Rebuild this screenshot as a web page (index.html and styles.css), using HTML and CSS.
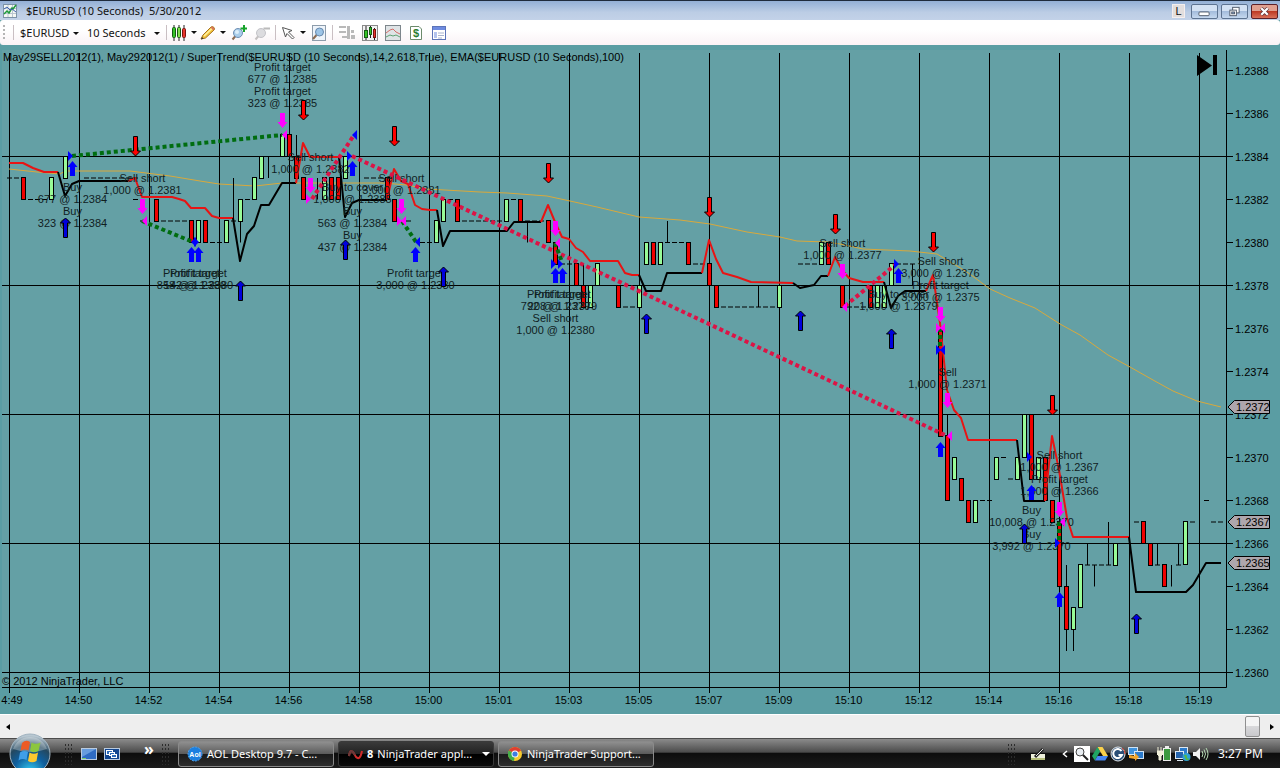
FILE: index.html
```
<!DOCTYPE html>
<html lang="en">
    <head>
        <meta charset="utf-8">
        <title>$EURUSD (10 Seconds) 5/30/2012</title>
        <link rel="stylesheet" href="styles.css">
    </head>
    <body>
        <header class="title-bar">
            <svg class="app-icon" viewBox="0 0 14 14">
                <rect x="0.5" y="0.5" width="13" height="13" fill="#f4f8f4" stroke="#7d93a8" />
                <path d="M1 4.5H13M1 9.5H13M5 1V13M9.5 1V13" stroke="#b9c6d0" fill="none" />
                <path d="M1 10L4 7L6 9L9 4L10 5L13 1" stroke="#1f9a3a" stroke-width="1.5" fill="none" />
                <path d="M1 5L4 3L7 6L9 5L13 8" stroke="#3f62b0" fill="none" />
            </svg>
            <h1>$EURUSD (10 Seconds)&nbsp; 5/30/2012</h1>
            <div class="window-buttons">
                <button class="link-button">L</button>
                <button class="win-button" aria-label="Minimize">
                    <svg viewBox="0 0 27 14"><rect x="7.5" y="7.5" width="11" height="4" rx="1" fill="#fff" stroke="#4c5666" /></svg>
                </button>
                <button class="win-button" aria-label="Restore">
                    <svg viewBox="0 0 27 14">
                        <rect x="11.5" y="2.5" width="7" height="6" fill="#fff" stroke="#4c5666" />
                        <rect x="8.5" y="5.5" width="7" height="6" fill="#fff" stroke="#4c5666" />
                        <rect x="10.5" y="7.5" width="3" height="2" fill="#8ba6cd" stroke="#4c5666" />
                    </svg>
                </button>
                <button class="win-button close" aria-label="Close">
                    <svg viewBox="0 0 27 14">
                        <path d="M10 3.500L17 10.500M17 3.500L10 10.500" stroke="#5a3238" stroke-width="4" />
                        <path d="M10 3.500L17 10.500M17 3.500L10 10.500" stroke="#fff" stroke-width="2.400" />
                    </svg>
                </button>
            </div>
        </header>

        <nav class="toolbar">
            <span class="grip"></span>
            <span class="separator"></span>
            <label class="picker instrument">
                <select aria-label="Instrument"><option>$EURUSD</option></select>
            </label>
            <label class="picker interval">
                <select aria-label="Interval"><option>10 Seconds</option></select>
            </label>
            <span class="separator"></span>
            <button class="tool drop" aria-label="Chart style">
                <svg viewBox="0 0 16 16">
                    <path d="M3 0V16M8 0V16M13 0V16" stroke="#222" />
                    <rect x="1.500" y="2.500" width="3" height="10" rx="1" fill="#35c427" stroke="#145c12" />
                    <rect x="6.500" y="2.500" width="3" height="10" rx="1" fill="#7fdf4c" stroke="#145c12" />
                    <rect x="11.500" y="3.500" width="3" height="9" rx="1" fill="#e8362c" stroke="#7a1310" />
                </svg>
            </button>
            <button class="tool drop" aria-label="Drawing tools">
                <svg viewBox="0 0 16 16">
                    <path d="M1 14L3 10L11 2Q12.500 1 14 2.500Q15 4 14 5L5.500 13Z" fill="#f5c73c" stroke="#a5701d" />
                    <path d="M4 11L12 3.500" stroke="#fff0a0" stroke-width="1.500" />
                    <path d="M10.500 2.500L13.500 5.500L14.500 4L12.500 1.500Z" fill="#d9735c" />
                    <path d="M1 14.500L2 12L3.500 13.500Z" fill="#333" />
                </svg>
            </button>
            <button class="tool" aria-label="Zoom in">
                <svg viewBox="0 0 16 16">
                    <path d="M4.500 11L1.500 14.500" stroke="#8b6b52" stroke-width="2" />
                    <circle cx="7" cy="8" r="4.500" fill="#a9cdea" stroke="#6f8fb3" />
                    <circle cx="6" cy="7" r="2" fill="#dceefa" />
                    <path d="M13 0V7M9.500 3.500H16" stroke="#16a32a" stroke-width="2" />
                </svg>
            </button>
            <button class="tool" aria-label="Zoom out">
                <svg viewBox="0 0 16 16">
                    <path d="M4.500 11L1.500 14.500" stroke="#c4c0c0" stroke-width="2" />
                    <circle cx="7" cy="8" r="4.500" fill="#dcdcdf" stroke="#c3c3c8" />
                    <path d="M9.500 3.500H16" stroke="#bbb" stroke-width="2" />
                </svg>
            </button>
            <span class="separator"></span>
            <button class="tool drop" aria-label="Cursor">
                <svg viewBox="0 0 16 16">
                    <path d="M2.500 2.500L12 5.500L8.500 7L14 12.500L12.500 14L7 8.500L5.500 12Z" fill="#fff" stroke="#555" />
                </svg>
            </button>
            <button class="tool" aria-label="Data box">
                <svg viewBox="0 0 16 16">
                    <rect x="1.500" y="0.500" width="13" height="15" fill="#eef4fa" stroke="#8d9cab" />
                    <path d="M5.500 10L2 14" stroke="#8b6b52" stroke-width="2" />
                    <circle cx="8.500" cy="7" r="4" fill="#9cc4e6" stroke="#6688ad" />
                </svg>
            </button>
            <span class="separator"></span>
            <button class="tool" aria-label="Chart trader">
                <svg viewBox="0 0 16 16" fill="#b9b9b9">
                    <rect x="0" y="1" width="7" height="2" /><rect x="0" y="6" width="7" height="2" />
                    <rect x="3" y="11" width="5" height="2" /><rect x="8" y="1" width="3" height="13" />
                    <rect x="12" y="5" width="3" height="3" /><rect x="12" y="10" width="4" height="4" />
                </svg>
            </button>
            <button class="tool" aria-label="Data series">
                <svg viewBox="0 0 16 16">
                    <rect x="0.500" y="0.500" width="15" height="15" fill="#f2f2f2" stroke="#8a8a8a" />
                    <path d="M4 1V15M8.500 1V13M12.500 3V15" stroke="#222" />
                    <rect x="2.500" y="5.500" width="3" height="7" fill="#35c427" stroke="#145c12" />
                    <rect x="7.500" y="2.500" width="2" height="7" fill="#35c427" stroke="#145c12" />
                    <rect x="11.500" y="4.500" width="2" height="8" fill="#e8362c" stroke="#7a1310" />
                </svg>
            </button>
            <button class="tool" aria-label="Indicators">
                <svg viewBox="0 0 16 16">
                    <rect x="0.500" y="0.500" width="15" height="15" fill="#dfe4e6" stroke="#7d868c" />
                    <path d="M1 8L5 5L8 4L11 7L15 9" stroke="#d36d68" fill="none" />
                    <path d="M1 12L5 10L8 11L11 10L15 12" stroke="#5ea274" fill="none" />
                </svg>
            </button>
            <button class="tool" aria-label="Strategies">
                <svg viewBox="0 0 16 16">
                    <path d="M2.500 1.500H11L13.500 4V14.500H2.500Z" fill="#fff" stroke="#6b8a6b" />
                    <text x="8" y="12" class="dollar">$</text>
                </svg>
            </button>
            <button class="tool" aria-label="Properties">
                <svg viewBox="0 0 16 16">
                    <rect x="1.500" y="1.500" width="13" height="13" fill="#fff" stroke="#5c74b8" />
                    <rect x="2" y="2" width="12" height="3" fill="#6e8be0" />
                    <rect x="3" y="7" width="3" height="6" fill="#b3c3ee" />
                    <path d="M7 8H13M7 10.500H13M7 13H11" stroke="#a9b4cf" />
                </svg>
            </button>
        </nav>

        <main class="chart-panel">
            <svg id="chart" viewBox="0 45 1280 669" role="img" aria-label="$EURUSD 10 second chart"></svg>
        </main>

        <div class="scroll-bar">
            <button aria-label="Scroll left">
                <svg viewBox="0 0 4 6"><path d="M4 0V6L0 3Z" /></svg>
            </button>
            <div class="scroll-track"><div class="scroll-thumb"></div></div>
            <button aria-label="Scroll right">
                <svg viewBox="0 0 4 6"><path d="M0 0V6L4 3Z" /></svg>
            </button>
        </div>

        <footer class="taskbar">
            <button class="start" aria-label="Start">
                <svg viewBox="0 0 42 35">
                    <defs>
                        <radialGradient id="orb" cx="50%" cy="95%" r="90%">
                            <stop offset="0" stop-color="#36d0f5" />
                            <stop offset="0.450" stop-color="#0f5f9e" />
                            <stop offset="0.750" stop-color="#24485f" />
                            <stop offset="1" stop-color="#b9c8d2" />
                        </radialGradient>
                    </defs>
                    <circle cx="21" cy="21" r="20" fill="url(#orb)" stroke="#9fb2bf" />
                    <path d="M4 16A18 18 0 0 1 38 16Q21 22 4 16Z" fill="#fff" opacity="0.300" />
                    <path d="M13 10Q17 6 21 9L19.500 17.500Q15.500 15.500 11.500 18Z" fill="#ec5a24" />
                    <path d="M22.500 9.500Q26.500 12 31.500 9.500L29.500 18Q25 20.500 21 18Z" fill="#8cc63e" />
                    <path d="M11 19.500Q15 17 19 19L17.500 27Q13.500 25 9.500 27.500Z" fill="#3f9ee8" />
                    <path d="M20.500 19.500Q25 22 29 19.500L27.500 28Q23 30.500 19 28Z" fill="#fdc82f" />
                </svg>
            </button>
            <span class="dots"></span>
            <div class="quick-launch">
                <button aria-label="Show desktop">
                    <svg viewBox="0 0 16 14">
                        <rect x="0.500" y="1.500" width="15" height="11" fill="#2f6cc4" stroke="#b9cbe0" />
                        <path d="M1 2H15L1 10Z" fill="#7fb0ea" opacity="0.700" />
                        <path d="M1 11.500H5" stroke="#7fd06a" />
                    </svg>
                </button>
                <button aria-label="Switch windows">
                    <svg viewBox="0 0 16 14">
                        <rect x="0.500" y="1.500" width="15" height="11" fill="#12458f" stroke="#b9cbe0" />
                        <rect x="2.500" y="3.500" width="6" height="4" fill="#2c6ab8" stroke="#fff" />
                        <rect x="5.500" y="5.500" width="5" height="3" fill="#2c6ab8" stroke="#fff" />
                        <rect x="7.500" y="7.500" width="5" height="3" fill="#2c6ab8" stroke="#fff" />
                    </svg>
                </button>
                <button class="more" aria-label="More">»</button>
            </div>
            <span class="dots"></span>
            <div class="tasks">
                <button class="task">
                    <svg viewBox="0 0 16 16">
                        <circle cx="8" cy="8" r="7" fill="#1b7fe0" stroke="#4aa2f2" stroke-dasharray="2 1" />
                        <text x="8" y="11" class="aol">Aol</text>
                    </svg>
                    <span>AOL Desktop 9.7 - C...</span>
                </button>
                <button class="task active">
                    <svg viewBox="0 0 16 16">
                        <path d="M2 10Q3 3 6 6L9 11Q13 15 15 5" stroke="#d02a2a" stroke-width="2" fill="none" />
                        <path d="M2 10Q3 3 6 6L8 9" stroke="#6b3a3a" stroke-width="2" fill="none" />
                    </svg>
                    <b>8</b>
                    <span>NinjaTrader appl...</span>
                    <i class="caret"></i>
                </button>
                <button class="task">
                    <svg viewBox="0 0 16 16">
                        <circle cx="8" cy="8" r="7" fill="#f7ca2e" />
                        <path d="M8 8L1.900 4.500A7 7 0 0 1 14.100 4.500Z" fill="#df3f31" />
                        <path d="M8 8L1.900 4.500A7 7 0 0 0 7 15Z" fill="#3fae49" />
                        <circle cx="8" cy="8" r="3.500" fill="#fff" />
                        <circle cx="8" cy="8" r="2.600" fill="#3f7de0" />
                    </svg>
                    <span>NinjaTrader Support...</span>
                </button>
            </div>
            <div class="tray">
                <span class="dots"></span>
                <svg class="pen" viewBox="0 0 16 16">
                    <path d="M1 8H15V14H1Z" fill="#eef0dc" /><path d="M1 13H15" stroke="#b6bf7a" stroke-width="2" />
                    <path d="M5 11L13 3" stroke="#222" stroke-width="3" /><path d="M6 10L13 3" stroke="#e8e8e8" />
                </svg>
                <button class="expand" aria-label="Show hidden icons">
                    <svg viewBox="0 0 6 8"><path d="M5 1L1.500 4L5 7" stroke="#fff" stroke-width="1.500" fill="none" /></svg>
                </button>
                <svg viewBox="0 0 16 16">
                    <rect width="16" height="16" fill="#fff" />
                    <circle cx="6" cy="6" r="4" fill="#e9eef2" stroke="#444" />
                    <path d="M9 9L14 14" stroke="#222" stroke-width="2" />
                </svg>
                <svg viewBox="0 0 16 16">
                    <path d="M5.500 1H10.500L16 10H11Z" fill="#fbd14b" />
                    <path d="M5.500 1L8 5.500L2.800 14.500L0 10Z" fill="#1fa463" />
                    <path d="M5.500 10H16L13.200 14.500H2.800Z" fill="#4687f4" />
                </svg>
                <svg viewBox="0 0 16 16">
                    <circle cx="8" cy="8" r="7" fill="#2b4f77" stroke="#e5e9ec" />
                    <path d="M11.500 5A4.500 4.500 0 1 0 12 9H8.500" stroke="#fff" stroke-width="2" fill="none" />
                    <path d="M12 2A7 7 0 0 1 15 8" stroke="#d9402f" fill="none" />
                </svg>
                <svg viewBox="0 0 16 16">
                    <rect x="0.500" y="1.500" width="9" height="7" fill="#3e92dd" stroke="#cfe3f5" />
                    <rect x="6.500" y="5.500" width="9" height="7" fill="#2b7acb" stroke="#cfe3f5" />
                    <path d="M1 9L7 10V7L11 11L7 15V13L1 12Z" fill="#f3a62b" />
                </svg>
                <svg class="power" viewBox="0 0 16 16">
                    <rect x="6.500" y="2.500" width="7" height="12" fill="#3c9a3f" stroke="#eee" />
                    <rect x="8" y="0" width="4" height="2" fill="#eee" />
                    <path d="M1 1V5M4 1V5M0 5H6V8L4 10V14H2V10L0 8Z" fill="#f0efd8" stroke="#f0efd8" />
                </svg>
                <svg viewBox="0 0 16 16">
                    <rect x="4.500" y="1.500" width="8" height="7" fill="#2b7acb" stroke="#dde8f2" />
                    <rect x="0.500" y="5.500" width="8" height="7" fill="#2463ae" stroke="#dde8f2" />
                    <path d="M2 14.500H8" stroke="#dde8f2" />
                    <circle cx="11.500" cy="11" r="4" fill="#2e9fd8" /><path d="M9 9Q12 8 12 11T15 12Q13 15 11 14Z" fill="#55b944" />
                </svg>
                <svg viewBox="0 0 16 16">
                    <path d="M0 6H3L7 2V14L3 10H0Z" fill="#f2f2f2" />
                    <path d="M9 5Q11 8 9 11M11 3.500Q14 8 11 12.500M13 2Q17 8 13 14" stroke="#b7dcb5" fill="none" />
                </svg>
                <time class="clock">3:27 PM</time>
            </div>
        </footer>
        <script src="chart.js"></script>
    </body>
</html>
```
FILE: styles.css
```
* {
    box-sizing: border-box;
}

body {
    margin: 0;
    min-height: 100vh;
    display: flex;
    flex-direction: column;
    background: #5a9da3;
    font-family: "Noto Sans", "Open Sans", sans-serif;
    font-size: 11px;
    color: #111;
}

button,
select {
    margin: 0;
    padding: 0;
    border: none;
    background: none;
    font: inherit;
    color: inherit;
}

svg {
    display: block;
}

/* title bar */
.title-bar {
    display: flex;
    align-items: center;
    height: 20px;
    padding: 1px 2px 0 3px;
    border-top: 1px solid #1f2b3c;
    background: linear-gradient(#93b0d6, #bccde5 60%, #c3d2e8);
}

.app-icon {
    width: 14px;
    height: 14px;
}

.title-bar h1 {
    flex: 1;
    margin: 0 0 0 9px;
    font-size: 11px;
    font-weight: normal;
    line-height: 18px;
}

.window-buttons {
    display: flex;
    gap: 3px;
}

.link-button {
    width: 13px;
    height: 14px;
    margin-right: 3px;
    border: 1px solid #f4eeee;
    background: #e2dede;
    font-family: "Liberation Sans", sans-serif;
    font-size: 11px;
    line-height: 12px;
}

.win-button {
    width: 27px;
    height: 15px;
    border: 1px solid #5d7391;
    border-radius: 2px;
    background: linear-gradient(#d3e1f3 45%, #a4bcdc 50%, #c5d8ef);
}

.win-button svg {
    width: 25px;
    height: 13px;
}

.close {
    border-color: #5c2028;
    background: linear-gradient(#e0a090 45%, #bd3a25 50%, #d9705a);
}

/* toolbar */
.toolbar {
    display: flex;
    align-items: center;
    height: 25px;
    padding-left: 3px;
    border-radius: 3px;
    background: linear-gradient(#fff 40%, #f9f2f5);
}

.grip {
    width: 2px;
    height: 15px;
    margin-right: 6px;
    background: repeating-linear-gradient(#b5b5b5 0 2px, transparent 2px 4px);
}

.separator {
    width: 1px;
    height: 15px;
    margin: 0 2px;
    background: #c9bfc3;
}

.picker {
    position: relative;
    height: 20px;
    padding-left: 4px;
}

.picker select {
    width: 100%;
    height: 20px;
    appearance: none;
}

.instrument {
    width: 67px;
}

.interval {
    width: 81px;
}

.picker::after,
.drop::after {
    content: "";
    border: 3px solid transparent;
    border-top-color: #111;
    border-bottom: none;
}

.picker::after {
    position: absolute;
    right: 4px;
    top: 9px;
    pointer-events: none;
}

.tool {
    display: flex;
    align-items: center;
    justify-content: center;
    width: 23px;
    height: 22px;
}

.tool svg {
    width: 16px;
    height: 16px;
}

.drop {
    width: 29px;
    gap: 4px;
}

.dollar {
    font: bold 11px "Liberation Sans", sans-serif;
    fill: #2a7d2e;
    text-anchor: middle;
}

/* chart */
.chart-panel {
    flex: 1;
}

#chart {
    width: 100%;
    font-family: "Liberation Sans", sans-serif;
    font-size: 11px;
}

.plot {
    fill: #64a0a5;
}

.grid {
    stroke: #000;
    fill: none;
}

.note,
.time {
    text-anchor: middle;
}

.note {
    fill: #10201f;
}

.up {
    fill: #98fb98;
    stroke: #000;
}

.down {
    fill: #f00000;
    stroke: #000;
}

.ema,
.bull,
.bear {
    fill: none;
    stroke-width: 2;
    stroke-linejoin: round;
}

.ema {
    stroke: #d9a93c;
    stroke-width: 1;
}

.bull {
    stroke: #000;
}

.bear {
    stroke: #e81414;
}

.win,
.loss {
    stroke: #006d10;
    stroke-width: 4;
    stroke-dasharray: 4 3;
}

.loss {
    stroke: #dc1446;
}

.signal-down {
    fill: #f00;
    stroke: #000;
}

.signal-up {
    fill: #00d;
    stroke: #000;
}

.buy {
    fill: #00f;
}

.sell {
    fill: #f0f;
}

.tag {
    fill: #aea6ac;
    stroke: #000;
}

/* scroll bar */
.scroll-bar {
    display: flex;
    align-items: center;
    height: 24px;
    padding: 0 6px;
    border-top: 1px solid #fff;
    background: #eee;
}

.scroll-bar svg {
    width: 4px;
    height: 6px;
}

.scroll-track {
    flex: 1;
    display: flex;
    justify-content: flex-end;
    padding-right: 10px;
}

.scroll-thumb {
    width: 15px;
    height: 21px;
    border: 1px solid #8f8f8f;
    border-radius: 2px;
    background: linear-gradient(#f4f4f4 45%, #d8d8da 50%, #c9c9cc);
}

/* taskbar */
.taskbar {
    display: flex;
    align-items: center;
    height: 30px;
    padding-left: 9px;
    border-top: 1px solid #4c4c4c;
    background: linear-gradient(#8b8b8b, #4c4c4c 45%, #0d0d0d 50%, #1c1c1c);
    color: #fff;
}

.start {
    align-self: flex-end;
    width: 42px;
    height: 35px;
    margin-right: 13px;
}

.dots {
    width: 9px;
    height: 22px;
    background: radial-gradient(circle, #2c2c2c 1px, transparent 1px) 0 0 / 3px 4px;
}

.quick-launch {
    display: flex;
    align-items: center;
    gap: 7px;
    width: 72px;
    margin: 0 8px;
}

.quick-launch svg {
    width: 16px;
    height: 14px;
}

.more {
    margin: 0 0 10px 17px;
    font-size: 16px;
    font-weight: bold;
    line-height: 16px;
}

.tasks {
    display: flex;
    flex: 1;
    gap: 4px;
    margin-left: 8px;
}

.task {
    display: flex;
    align-items: center;
    gap: 4px;
    width: 156px;
    height: 26px;
    padding: 0 3px 0 8px;
    border: 1px solid #8a8a8a;
    border-radius: 3px;
    background: linear-gradient(#8f8f8f, #5c5c5c 48%, #1a1a1a 52%, #2e2e2e);
    white-space: nowrap;
}

.task.active {
    border-color: #3a3a3a;
    background: linear-gradient(#3a3a3a, #222 48%, #000 52%, #0c0c0c);
}

.task svg,
.tray svg {
    flex: none;
    width: 16px;
    height: 16px;
}

.aol {
    font: bold 7px "Liberation Sans", sans-serif;
    fill: #fff;
    text-anchor: middle;
}

.caret {
    margin-left: auto;
    border: 4px solid transparent;
    border-top-color: #fff;
    border-bottom: none;
}

.tray {
    display: flex;
    align-items: center;
    gap: 2px;
    padding-right: 17px;
}

.tray .dots {
    margin-right: 12px;
}

.tray .expand {
    margin: 0 4px 0 14px;
}

.tray .expand svg {
    width: 6px;
    height: 8px;
}

.tray .power {
    margin-left: 11px;
}

.clock {
    margin-left: 7px;
    font-size: 12px;
}
```
FILE: chart.js
```
// bar spacing and price scale (prices are in pips above 1.2300)
const barX = i => 9.5 + 7 * i;
const priceY = p => 672.5 - 21.5 * (p - 60);

const times = ['4:49', '14:50', '14:52', '14:54', '14:56', '14:58', '15:00', '15:01', '15:03',
    '15:05', '15:07', '15:09', '15:10', '15:12', '15:14', '15:16', '15:18', '15:19'];

// bar, open, close, high, low
const candles = [
    [2, 83, 82], [6, 82, 83], [8, 83, 84], [21, 82, 81], [26, 81, 80], [27, 80, 81], [28, 81, 80],
    [31, 80, 81], [33, 81, 82, 82, 80], [35, 82, 83], [36, 83, 84], [39, 84, 85], [40, 85, 84],
    [41, 84, 83, 85, 83], [42, 83, 82], [45, 82, 83], [46, 83, 82], [47, 83, 82], [48, 83, 84],
    [54, 83, 82], [55, 82, 81], [61, 80, 81], [62, 81, 82], [64, 82, 81], [71, 81, 82], [73, 82, 81],
    [77, 81, 80], [78, 80, 79], [81, 79, 78], [82, 78, 77, 79, 77], [83, 77, 78], [84, 78, 79],
    [87, 78, 77], [90, 77, 78], [91, 79, 80], [92, 80, 79], [93, 79, 80], [97, 80, 79], [100, 79, 78],
    [101, 78, 77], [110, 77, 78], [116, 79, 80], [117, 80, 79], [119, 78, 77], [123, 78, 77],
    [124, 77, 78], [125, 77, 78], [126, 78, 79], [133, 76, 71], [134, 71, 68, 72, 68], [135, 69, 70],
    [136, 69, 68], [137, 68, 67], [138, 67, 68], [141, 69, 70], [144, 69, 70], [145, 70, 72],
    [146, 72, 69], [147, 69, 70], [148, 70, 68], [149, 68, 67], [150, 67, 64], [151, 64, 62, 65, 61],
    [152, 62, 63, 63, 61], [153, 63, 65], [158, 65, 66], [162, 67, 66], [163, 66, 65], [165, 65, 64],
    [168, 65, 67]
];

// unchanged bars: first bar, last bar, price
const flats = [
    [0, 1, 83], [3, 5, 82], [11, 18, 83], [18, 19, 82], [19, 19, 81], [22, 25, 81], [29, 30, 80],
    [32, 32, 81], [34, 34, 82], [51, 53, 83], [57, 57, 81], [59, 60, 80], [63, 63, 82], [65, 70, 81],
    [72, 72, 82], [74, 76, 81], [79, 80, 79], [88, 89, 77], [94, 96, 80], [98, 99, 79],
    [102, 109, 77], [113, 115, 79], [120, 122, 77], [127, 129, 79], [139, 140, 68], [142, 142, 70],
    [143, 143, 69], [154, 157, 65], [161, 161, 67], [164, 164, 65], [167, 167, 65], [169, 169, 67],
    [171, 171, 68], [172, 173, 67]
];

// bar, high, low
const wicks = [[32, 83, 81], [37, 84, 83], [44, 83, 82], [74, 81, 80], [94, 81, 80], [107, 78, 77],
    [129, 79, 78], [154, 66, 65], [155, 65, 64], [157, 67, 65], [164, 66, 65], [166, 65, 64], [167, 66, 65]];

const ema = '9,169 37,172 60,174 65,171 130,171 170,176 200,181 219,184 255,186 282,183 383,183 407,185 ' +
    '427,189 480,192 507,193 547,196 570,201 597,207 639,217 680,220 710,224 747,232 780,237 797,241 ' +
    '827,242 840,244 863,249 910,251 937,254 967,272 990,289 1010,298 1035,308 1060,324 1080,335 1108,355 ' +
    '1130,367 1153,380 1173,391 1197,401 1221,407';

const trend = [
    ['bear', '9,163 23,163 33,168 44,172 58,172'],
    ['bull', '58,172 65,196 72,184 79,181 128,181'],
    ['bear', '128,181 135,178 142,197 172,197 179,199 185,201 191,208 205,208 212,216 219,218 233,218'],
    ['bull', '233,218 240,261 247,234 254,226 261,205 269,205 282,183 296,183'],
    ['bear', '296,183 303,143 310,157 339,157'],
    ['bull', '339,157 345,217 352,203 359,200 387,200'],
    ['bear', '387,200 394,169 401,181 408,184 415,205 422,209 430,210 437,210'],
    ['bull', '437,210 443,246 450,231 507,231 514,222 541,222'],
    ['bear', '541,222 548,205 555,222 562,237 569,239 576,248 583,252 590,261 618,261 625,273 632,275 639,275'],
    ['bull', '639,275 646,291 661,291 667,273 702,273'],
    ['bear', '702,273 709,240 716,259 723,273 737,277 751,282 793,283'],
    ['bull', '793,283 800,288 814,285 821,276 828,276'],
    ['bear', '828,276 835,257 842,270 849,278 863,282 884,282'],
    ['bull', '884,282 891,308 898,296 905,291 926,291'],
    ['bear', '926,291 933,275 940,323 947,390 954,410 961,418 968,440 1017,440'],
    ['bull', '1017,440 1024,501 1045,501'],
    ['bear', '1045,501 1052,436 1059,470 1067,518 1073,537 1129,537'],
    ['bull', '1129,537 1136,592 1186,592 1193,585 1206,563 1221,563']
];

const trades = [
    ['win', 72, 156, 282, 135], ['win', 142, 221, 193, 242], ['loss', 312, 199, 354, 135],
    ['loss', 352, 156, 947, 436], ['win', 402, 221, 416, 242], ['win', 555, 243, 562, 262],
    ['loss', 845, 306, 895, 265], ['win', 940, 328, 940, 350], ['win', 1059, 522, 1059, 543]
];

// bar, first baseline, lines
const notes = [
    [9, 191, 'Buy', '677 @ 1.2384', 'Buy', '323 @ 1.2384'],
    [19, 182, 'Sell short', '1,000 @ 1.2381'],
    [26, 277, 'Profit target', '858 @ 1.2380'],
    [27, 277, 'Profit target', '142 @ 1.2380'],
    [39, 71, 'Profit target', '677 @ 1.2385', 'Profit target', '323 @ 1.2385'],
    [43, 161, 'Sell short', '1,000 @ 1.2382'],
    [49, 191, 'Buy to cover', '1,000 @ 1.2385', 'Buy', '563 @ 1.2384', 'Buy', '437 @ 1.2384'],
    [56, 182, 'Sell short', '3,000 @ 1.2381'],
    [58, 277, 'Profit target', '3,000 @ 1.2380'],
    [78, 298, 'Profit target', '792 @ 1.2379', 'Sell short', '1,000 @ 1.2380'],
    [79, 298, 'Profit target', '208 @ 1.2379'],
    [119, 247, 'Sell short', '1,000 @ 1.2377'],
    [127, 298, 'Buy to cover', '1,000 @ 1.2379'],
    [133, 265, 'Sell short', '3,000 @ 1.2376', 'Profit target', '3,000 @ 1.2375'],
    [134, 376, 'Sell', '1,000 @ 1.2371'],
    [150, 459, 'Sell short', '1,000 @ 1.2367', 'Profit target', '1,000 @ 1.2366'],
    [146, 514, 'Buy', '10,008 @ 1.2370', 'Buy', '3,992 @ 1.2370']
];

// bar, y of the top edge
const signalsDown = [[18, 136], [42, 100], [55, 126], [77, 163], [100, 197], [118, 214], [132, 232], [149, 395]];
const signalsUp = [[8, 217], [33, 280], [48, 239], [62, 266], [91, 313], [113, 310], [126, 328], [145, 523], [161, 613]];
const buys = [[9, 161], [26, 247], [27, 247], [49, 161], [58, 247], [78, 268], [79, 268], [127, 268], [133, 442], [146, 485], [150, 592]];
const sells = [[19, 199], [39, 113], [43, 178], [56, 199], [78, 221], [119, 264], [133, 307], [134, 393], [150, 502]];

// fill markers: class, tip x, y, direction of the tip
const fills = [
    ['buy', 73, 156, 1], ['sell', 142, 221, -1], ['buy', 199, 242, 1], ['buy', 191, 242, -1],
    ['sell', 282, 135, -1], ['buy', 352, 135, -1], ['buy', 352, 156, 1], ['sell', 311, 199, 1],
    ['sell', 402, 221, 1], ['sell', 401, 221, -1], ['buy', 415, 242, -1], ['sell', 555, 243, -1],
    ['buy', 556, 264, 1], ['buy', 563, 264, 1], ['sell', 842, 307, -1], ['buy', 899, 264, 1],
    ['sell', 941, 328, 1], ['sell', 940, 328, -1], ['buy', 941, 350, 1], ['buy', 940, 350, -1],
    ['sell', 947, 436, -1], ['buy', 1032, 457, 1], ['sell', 1060, 522, -1], ['buy', 1060, 543, 1]
];

const tags = [[407, '1.2372'], [522, '1.2367'], [563, '1.2365']];

const text = (cls, x, y, s) => `<text class="${cls}" x="${x}" y="${y}">${s}</text>`;
const line = (cls, x1, y1, x2, y2) => `<line class="${cls}" x1="${x1}" y1="${y1}" x2="${x2}" y2="${y2}" />`;

let svg = '<rect class="plot" x="2" y="50" width="1224" height="637" />';

// axes and grid
for (let p = 60; p <= 84; p += 6) svg += line('grid', 2, priceY(p), 1226, priceY(p));
times.forEach((t, n) => {
    svg += line('grid', barX(n * 10), 53, barX(n * 10), 693);
    svg += text('time', n ? barX(n * 10) - 1 : 12, 704, t);
});
svg += '<path class="grid" d="M2 687.5H1226.5V50" />';
for (let p = 60; p <= 88; p += 2) {
    svg += line('grid', 1226, priceY(p), 1233, priceY(p));
    svg += text('', 1235, priceY(p) + 4, '1.23' + p);
}
svg += text('', 3, 61, 'May29SELL2012(1), May292012(1) / SuperTrend($EURUSD (10 Seconds),14,2.618,True), EMA($EURUSD (10 Seconds),100)');
svg += text('', 2, 685, '© 2012 NinjaTrader, LLC');

svg += `<polyline class="ema" points="${ema}" />`;

// bars
flats.forEach(([from, to, p]) => {
    for (let i = from; i <= to; i++) svg += line('grid', barX(i) - 2.5, priceY(p), barX(i) + 2.5, priceY(p));
});
wicks.forEach(([i, high, low]) => svg += line('grid', barX(i), priceY(high), barX(i), priceY(low)));
candles.forEach(([i, open, close, high = Math.max(open, close), low = Math.min(open, close)]) => {
    const top = Math.round(priceY(Math.max(open, close))) - 0.5;
    const height = Math.round(Math.abs(open - close) * 21.5);
    svg += line('grid', barX(i), priceY(high), barX(i), priceY(low));
    svg += `<rect class="${close > open ? 'up' : 'down'}" x="${barX(i) - 2}" y="${top}" width="4" height="${height}" />`;
});

trend.forEach(([cls, points]) => svg += `<polyline class="${cls}" points="${points}" />`);

notes.forEach(([bar, y, ...lines]) => {
    lines.forEach((s, n) => svg += text('note', barX(bar), y + n * 12, s));
});

trades.forEach(t => svg += line(...t));

// arrows
const arrow = (cls, d, [bar, y]) => `<path class="${cls}" transform="translate(${barX(bar)} ${y})" d="${d}" />`;
signalsDown.forEach(a => svg += arrow('signal-down', 'M-2 0.5H2V15H5L0 20L-5 15H-2Z', a));
signalsUp.forEach(a => svg += arrow('signal-up', 'M-2 20.5H2V6H5L0 1L-5 6H-2Z', a));
buys.forEach(a => svg += arrow('buy', 'M-2.5 15H2.500V6H5L0 0L-5 6H-2.500Z', a));
sells.forEach(a => svg += arrow('sell', 'M-2.500 0H2.500V9H5L0 15L-5 9H-2.500Z', a));
fills.forEach(([cls, x, y, dir]) => {
    svg += `<path class="${cls}" d="M${x} ${y}L${x - 5 * dir} ${y - 5}V${y + 5}Z" />`;
});

tags.forEach(([y, s]) => {
    svg += `<path class="tag" d="M1228 ${y}L1234.5 ${y - 6.5}H1269.5V${y + 6.5}H1234.5Z" />`;
    svg += text('', 1236, y + 4, s);
});

// go to last bar
svg += '<path d="M1197 55L1212 65.5L1197 76ZM1213 55H1217V75H1213Z" />';

document.getElementById('chart').innerHTML = svg;
```
